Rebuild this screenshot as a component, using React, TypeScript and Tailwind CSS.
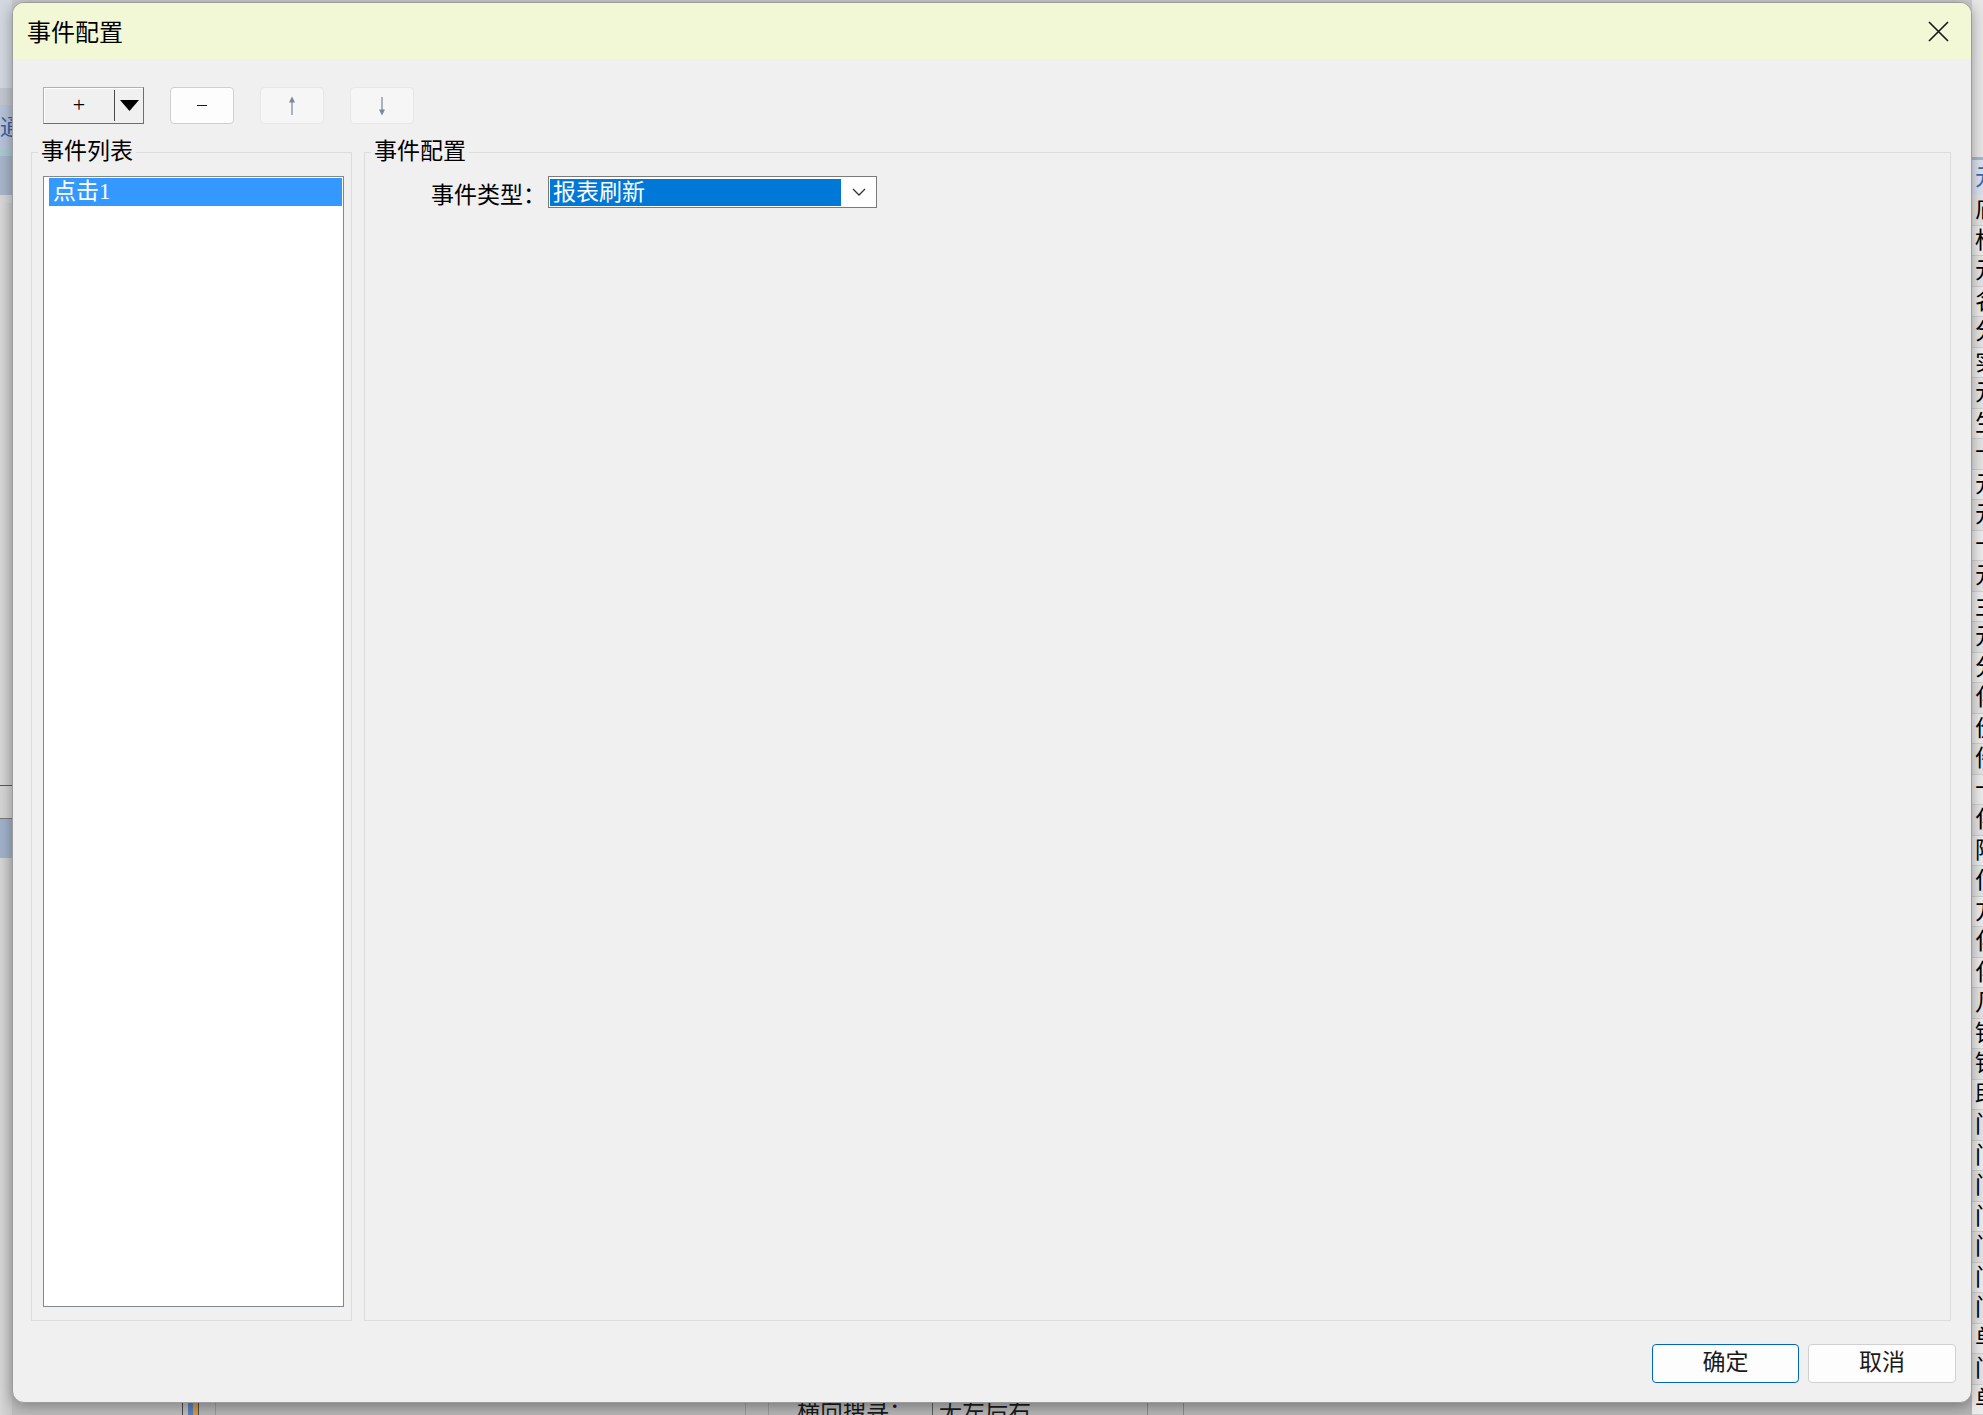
import React from 'react';

const rightChars = '庙标元名分实元生卡元元十元主元分化价件卡化附付方化化凡钮钮助门门门门门门门单门单门';

// background app strips (partly covered by the dialog)
const LeftStrip = () => (
  <div className="w-[12px] h-full flex flex-col bg-[#d2d2d2] overflow-hidden">
    <div className="h-[88px] shrink-0 bg-[#d3d8e0]" />
    <div className="h-[17px] shrink-0 bg-[#c2c6ce]" />
    <div className="h-[45px] shrink-0 bg-[#b6c3d8] text-[#3a5fa0] text-[22px] leading-[45px] overflow-hidden">通</div>
    <div className="h-[6px] shrink-0 bg-[#a9c9d2]" />
    <div className="h-[39px] shrink-0 bg-[#a7b5ca]" />
    <div className="h-[8px] shrink-0 bg-[#d6d6d6]" />
    <div className="h-[582px] shrink-0 bg-gradient-to-r from-[#d8d8d8] to-[#cdcdcd]" />
    <div className="h-[1px] shrink-0 bg-[#5a5a5a]" />
    <div className="h-[32px] shrink-0 bg-[#d4d4d4]" />
    <div className="h-[1px] shrink-0 bg-[#7a7a7a]" />
    <div className="h-[39px] shrink-0 bg-[#a0b1c9]" />
    <div className="flex-1 bg-gradient-to-r from-[#d6d6d6] to-[#c8c8c8]" />
  </div>
);

const RightStrip = () => (
  <div className="w-[11px] h-full flex flex-col bg-[#e2e2e2] overflow-hidden">
    <div className="h-[157px] shrink-0 bg-[#e6e6e6]" />
    <div className="h-[3px] shrink-0 bg-[#a9b6c8]" />
    <div className="h-[35px] shrink-0 bg-[#d9e2ee] text-[#3a6ab0] text-[23px] leading-[35px] pl-[3px] whitespace-nowrap">元</div>
    {rightChars.split('').map((c, i) => (
      <div
        key={i}
        className={`h-[30.5px] shrink-0 pl-[3px] text-[23px] leading-[30px] whitespace-nowrap text-black border-b border-[#d0d0d0] ${i % 2 ? 'bg-[#ececec]' : 'bg-[#e4e4e4]'}`}
      >
        {c}
      </div>
    ))}
  </div>
);

const BottomStrip = () => (
  <div className="h-[20px] flex bg-[#b5b5b5] text-[23px] leading-[34px] text-[#1a1a1a] overflow-hidden">
    <div className="w-[170px] bg-gradient-to-b from-[#c4c4c4] to-[#bcbcbc]" />
    <div className="w-[1px] bg-[#4a4a4a]" />
    <div className="w-[5px] bg-[#bdbdbd]" />
    <div className="w-[5px] bg-[#5b7fb8]" />
    <div className="w-[5px] bg-[#d09a48]" />
    <div className="w-[1px] bg-[#4a4a4a]" />
    <div className="w-[16px]" />
    <div className="w-[1px] bg-[#9a9a9a]" />
    <div className="w-[529px]" />
    <div className="w-[1px] bg-[#9a9a9a]" />
    <div className="w-[22px]" />
    <div className="w-[1px] bg-[#9a9a9a]" />
    <div className="w-[163px] pl-[28px] whitespace-nowrap">横向搜寻：</div>
    <div className="w-[1px] bg-[#5a5a5a]" />
    <div className="w-[214px] pl-[6px] whitespace-nowrap">无左后右</div>
    <div className="w-[1px] bg-[#8a8a8a]" />
    <div className="w-[35px]" />
    <div className="w-[1px] bg-[#8a8a8a]" />
  </div>
);

const CloseIcon = () => (
  <svg width="21" height="21" viewBox="0 0 21 21">
    <path d="M1 1 L20 20 M20 1 L1 20" stroke="#1a1a1a" strokeWidth="1.7" fill="none" />
  </svg>
);

const ArrowIcon = ({ down }: { down?: boolean }) => (
  <svg width="10" height="20" viewBox="0 0 10 20" className={down ? 'rotate-180' : ''}>
    <path d="M5 5 L5 19" stroke="#93a3b6" strokeWidth="1.6" />
    <path d="M5 0.5 L2 6.5 L8 6.5 Z" fill="#7d8894" />
  </svg>
);

const ChevronIcon = () => (
  <svg width="14" height="8" viewBox="0 0 14 8">
    <path d="M1 1 L7 7 L13 1" stroke="#333" strokeWidth="1.3" fill="none" />
  </svg>
);

const Toolbar = () => (
  <div className="ml-[12px] mt-[28px] flex gap-[26px] h-[37px]">
    <div className="w-[101px] h-full flex items-stretch bg-[#f0f0f0] border border-[#b0b0b0] border-b-[#6e6e6e] border-r-[#6e6e6e] shadow-[inset_1px_1px_0_#ffffff]">
      <div className="flex-1 flex items-center justify-center text-[22px] leading-none text-black pb-[2px]">+</div>
      <div className="w-[1px] my-[2px] bg-[#4a4a4a]" />
      <div className="w-[28px] flex items-center justify-center">
        <svg width="19" height="11" viewBox="0 0 19 11">
          <path d="M0 0 L19 0 L9.5 11 Z" fill="#000" />
        </svg>
      </div>
    </div>
    <div className="w-[64px] h-full flex items-center justify-center bg-[#fdfdfd] border border-[#cfcfcf] rounded-[4px]">
      <div className="w-[10px] h-[1.5px] bg-[#1a1a1a]" />
    </div>
    <div className="w-[64px] h-full flex items-center justify-center bg-[#f6f6f6] border border-[#e6e6e6] rounded-[4px]">
      <ArrowIcon />
    </div>
    <div className="w-[64px] h-full flex items-center justify-center bg-[#f6f6f6] border border-[#e6e6e6] rounded-[4px]">
      <ArrowIcon down />
    </div>
  </div>
);

const EventDialog = () => (
  <div className="absolute left-[12px] top-[2px] w-[1960px] h-[1401px] rounded-[12px] border border-[#9c9c9c] bg-[#f0f0f0] overflow-hidden shadow-[0_3px_14px_rgba(0,0,0,0.35)] flex flex-col">
    <div className="h-[56px] shrink-0 bg-[#f2f8d5] flex items-center justify-between pl-[14px] pr-[22px]">
      <span className="text-[24px] text-black font-['Noto_Sans_CJK_SC',sans-serif]">事件配置</span>
      <CloseIcon />
    </div>

    <div className="flex-1 min-h-0 flex flex-col pl-[18px] pr-[15px] pb-[19px]">
      <Toolbar />

      <div className="mt-[16px] mr-[5px] flex-1 min-h-0 flex gap-[12px]">
        <fieldset className="w-[321px] min-w-0 border border-[#dcdcdc] flex flex-col">
          <legend className="ml-[6px] px-[3px] text-[23px] leading-[24px] text-black">事件列表</legend>
          <div className="flex-1 min-h-0 flex flex-col pl-[11px] pr-[7px] pt-[12px] pb-[13px]">
            <div className="flex-1 bg-white border border-[#828790] pl-[5px] pr-[1px] pt-[1px]">
              <div className="h-[28px] bg-[#3399ff] text-white text-[23px] leading-[28px] pl-[4px]">点击1</div>
            </div>
          </div>
        </fieldset>

        <fieldset className="flex-1 min-w-0 border border-[#dcdcdc] flex flex-col">
          <legend className="ml-[6px] px-[3px] text-[23px] leading-[24px] text-black">事件配置</legend>
          <div className="pl-[66px] pt-[12px] flex items-start gap-[2px]">
            <span className="mt-[7px] text-[23px] leading-[26px] text-black">事件类型：</span>
            <div className="w-[329px] h-[32px] bg-white border border-[#7a7a7a] flex items-stretch pl-[1px] pt-[2px] pb-[1px]">
              <div className="w-[291px] bg-[#0078d7] text-white text-[23px] leading-[27px] pl-[3px]">报表刷新</div>
              <div className="flex-1 flex items-center justify-center pb-[1px]">
                <ChevronIcon />
              </div>
            </div>
          </div>
        </fieldset>
      </div>

      <div className="mt-[23px] flex justify-end gap-[9px] h-[39px] shrink-0">
        <button className="w-[147px] h-full bg-[#fdfdfd] border border-[#0067c0] rounded-[4px] text-[23px] text-[#1a1a1a]">确定</button>
        <button className="w-[148px] h-full bg-[#fdfdfd] border border-[#d0d0d0] rounded-[4px] text-[23px] text-[#1a1a1a]">取消</button>
      </div>
    </div>
  </div>
);

export default function App() {
  return (
    <div className="relative w-[1983px] h-[1415px] overflow-hidden bg-[#c8c8c8] font-['Liberation_Serif','Noto_Sans_CJK_SC',serif]">
      <div className="flex h-full">
        <LeftStrip />
        <div className="flex-1 flex flex-col">
          <div className="flex-1 bg-[#cccccc]" />
          <BottomStrip />
        </div>
        <RightStrip />
      </div>
      <EventDialog />
    </div>
  );
}
